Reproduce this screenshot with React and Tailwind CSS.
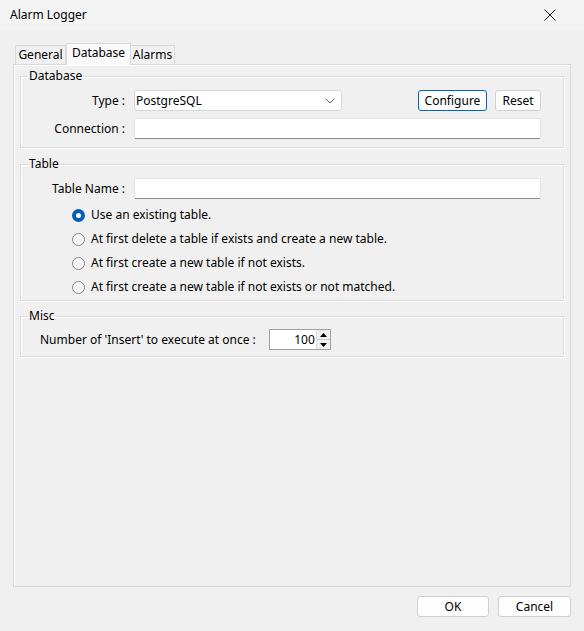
import React from 'react'

const FONT = "font-['Noto_Sans','Segoe_UI',sans-serif]"

function Field({ className = '' }) {
  return (
    <div className={`h-[21px] bg-white border border-[#e3e3e3] border-b-[#8a8a8a] rounded-[2px] ${className}`} />
  )
}

function Btn({ children, primary, className = '' }) {
  return (
    <button
      className={`h-[21px] flex items-center justify-center rounded-[3px] bg-[#fdfdfd] text-[12px] leading-[16px] text-black ${
        primary ? 'border border-[#0067c0]' : 'border border-[#d0d0d0]'
      } ${className}`}
    >
      {children}
    </button>
  )
}

function Radio({ checked, children }) {
  return (
    <div className="flex items-center h-[16px]">
      {checked ? (
        <span className="w-[13px] h-[13px] rounded-full bg-[#005fb8] flex items-center justify-center">
          <span className="w-[5px] h-[5px] rounded-full bg-white" />
        </span>
      ) : (
        <span className="w-[13px] h-[13px] rounded-full border border-[#858585] bg-[#f6f6f6]" />
      )}
      <span className="ml-[6px]">{children}</span>
    </div>
  )
}

function Group({ title, className = '', children }) {
  return (
    <fieldset
      className={`border border-[#dcdcdc] shadow-[inset_1px_1px_0_#fff,1px_1px_0_#fff] px-0 ${className}`}
    >
      <legend className="ml-[7px] px-[1px] h-[16px] leading-[16px]">{title}</legend>
      {children}
    </fieldset>
  )
}

export default function App() {
  return (
    <div className={`w-[584px] h-[631px] bg-[#f0f0f0] flex flex-col text-[12px] leading-[16px] text-black ${FONT}`}>
      {/* title bar */}
      <div className="h-[30px] flex items-center justify-between pl-[10px] pr-[28px] bg-[#f3f3f3]">
        <span>Alarm Logger</span>
        <svg width="12" height="12" viewBox="0 0 12 12" className="text-[#1a1a1a]">
          <path d="M0.5 0.5 L11.5 11.5 M11.5 0.5 L0.5 11.5" stroke="currentColor" strokeWidth="1" />
        </svg>
      </div>

      <div className="flex-1 flex flex-col px-[13px] pt-[13px]">
        {/* tabs */}
        <div className="flex items-end h-[21px] pl-[2px]">
          <div className="h-[19px] w-[51px] flex items-center justify-center border border-b-0 border-[#d9d9d9] bg-[#f0f0f0]">
            General
          </div>
          <div className="h-[22px] w-[65px] -mb-[1px] relative z-10 flex items-start pt-[1px] justify-center border border-b-0 border-[#d9d9d9] bg-[#f9f9f9]">
            Database
          </div>
          <div className="h-[19px] w-[44px] flex items-center justify-center border border-b-0 border-l-0 border-[#d9d9d9] bg-[#f0f0f0]">
            Alarms
          </div>
        </div>

        {/* panel */}
        <div className="h-[523px] w-[558px] border border-[#d9d9d9] shadow-[inset_1px_1px_0_#fff] pt-[3px] px-[6px] flex flex-col">
          <Group title="Database" className="pb-[8px]">
            <div className="pt-[6px] flex flex-col gap-[7px]">
              <div className="flex items-center h-[21px]">
                <span className="w-[104px] text-right">Type :</span>
                <div className="ml-[9px] w-[208px] h-[21px] bg-white border border-[#d6d6d6] rounded-[3px] flex items-center justify-between pl-[1px] pr-[6px]">
                  <span>PostgreSQL</span>
                  <svg width="10" height="6" viewBox="0 0 10 6">
                    <path d="M0.5 0.5 L5 5 L9.5 0.5" fill="none" stroke="#5f5f5f" strokeWidth="1" />
                  </svg>
                </div>
                <Btn primary className="ml-[76px] w-[69px]">Configure</Btn>
                <Btn className="ml-[8px] w-[46px]">Reset</Btn>
              </div>
              <div className="flex items-center h-[21px]">
                <span className="w-[104px] text-right">Connection :</span>
                <Field className="ml-[9px] w-[407px]" />
              </div>
            </div>
          </Group>

          <Group title="Table" className="mt-[8px] pb-[5px]">
            <div className="pt-[6px] flex items-center h-[27px]">
              <span className="w-[104px] text-right">Table Name :</span>
              <Field className="ml-[9px] w-[407px]" />
            </div>
            <div className="pl-[51px] pt-[8px] flex flex-col gap-[8px]">
              <Radio checked>Use an existing table.</Radio>
              <Radio>At first delete a table if exists and create a new table.</Radio>
              <Radio>At first create a new table if not exists.</Radio>
              <Radio>At first create a new table if not exists or not matched.</Radio>
            </div>
          </Group>

          <Group title="Misc" className="mt-[7px] pb-[6px]">
            <div className="pt-[5px] flex items-center h-[26px] pl-[19px]">
              <span>Number of 'Insert' to execute at once :</span>
              <div className="ml-[13px] w-[62px] h-[21px] bg-white border border-[#a0a0a0] flex">
                <span className="flex-1 text-right pr-[1px] leading-[19px]">100</span>
                <div className="w-[14px] flex flex-col border-l border-[#dcdcdc]">
                  <div className="flex-1 bg-[#f0f0f0] flex items-center justify-center border-b border-[#cfcfcf]">
                    <svg width="7" height="4" viewBox="0 0 7 4"><path d="M0 4 L3.5 0 L7 4 Z" fill="#000" /></svg>
                  </div>
                  <div className="flex-1 bg-[#f0f0f0] flex items-center justify-center">
                    <svg width="7" height="4" viewBox="0 0 7 4"><path d="M0 0 L7 0 L3.5 4 Z" fill="#000" /></svg>
                  </div>
                </div>
              </div>
            </div>
          </Group>
        </div>

        {/* footer buttons */}
        <div className="flex justify-end gap-[9px] mt-[9px]">
          <Btn className="w-[72px] h-[20px]">OK</Btn>
          <Btn className="w-[73px] h-[20px]">Cancel</Btn>
        </div>
      </div>
    </div>
  )
}
